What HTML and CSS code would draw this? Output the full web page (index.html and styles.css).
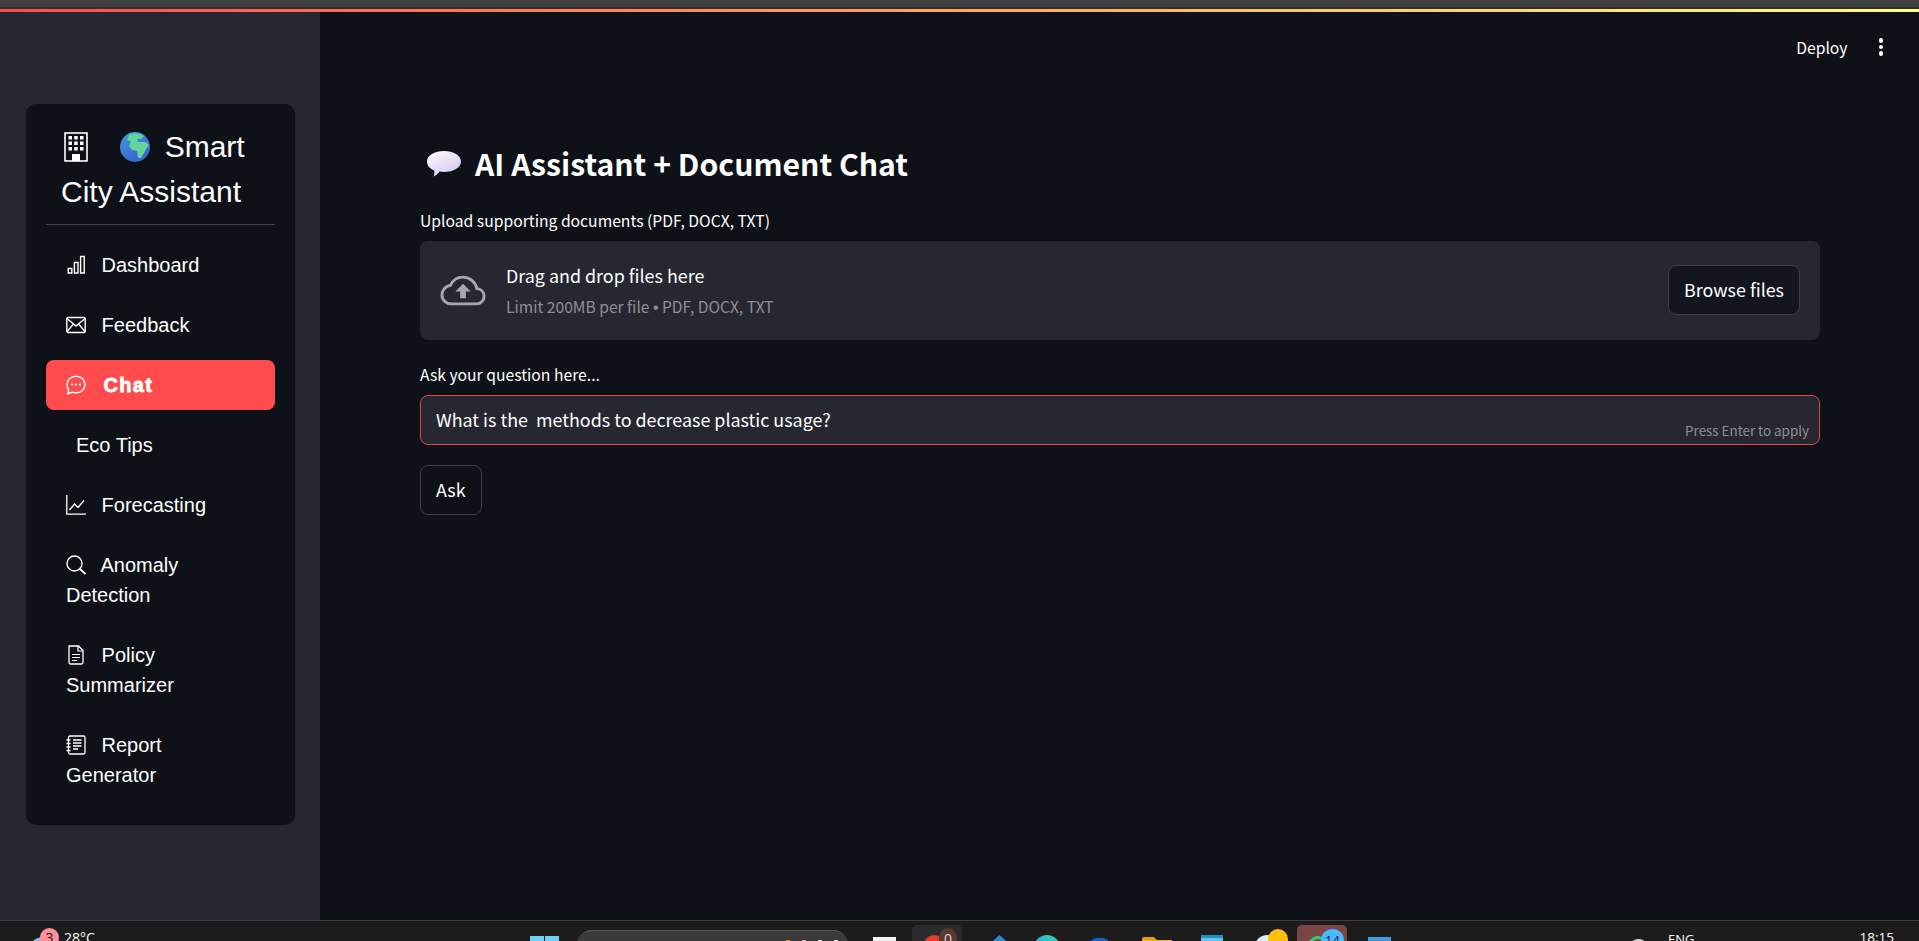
FILE: index.html
```html
<!DOCTYPE html>
<html>
    <head lang="en">
        <meta name="viewport" content="width=device-width, initial-scale=1" />
        <title>Smart City Assistant</title>
        <link rel="stylesheet" href="styles.css">
    </head>
    <body>
        <div class="browser-strip"></div>
        <div class="deco-line"></div>

        <div class="app">
            <aside class="sidebar">
                <nav class="menu-card">
                    <div class="brand">
                        <svg class="brand-building" viewBox="0 0 24 30" width="24" height="30">
                            <rect x="1" y="1" width="22" height="28" fill="none" stroke="#fff" stroke-width="1.6"/>
                            <g fill="#fff">
                                <rect x="4.500" y="4" width="3.500" height="3.500"/><rect x="10.200" y="4" width="3.500" height="3.500"/><rect x="16" y="4" width="3.500" height="3.500"/>
                                <rect x="4.500" y="9.500" width="3.500" height="3.500"/><rect x="10.200" y="9.500" width="3.500" height="3.500"/><rect x="16" y="9.500" width="3.500" height="3.500"/>
                                <rect x="4.500" y="15" width="3.500" height="3.500"/><rect x="10.200" y="15" width="3.500" height="3.500"/><rect x="16" y="15" width="3.500" height="3.500"/>
                                <rect x="8" y="22" width="8" height="7"/>
                            </g>
                        </svg>
                        <svg class="brand-globe" viewBox="0 0 30 30" width="30" height="30">
                            <defs>
                                <linearGradient id="sea" x1="0" y1="0" x2="0.6" y2="1">
                                    <stop offset="0" stop-color="#3f9be0"/>
                                    <stop offset="1" stop-color="#3a62d0"/>
                                </linearGradient>
                            </defs>
                            <circle cx="15" cy="15" r="15" fill="url(#sea)"/>
                            <path d="M9 3 C13 .5 20 .5 24 4 L21 7 L17 7 L18 10 L26 10 L29 13 L26 17 L24 21 L21 26 L18 26 L17 19 L12 18 L9 14 L11 9 L7 8 Z" fill="#62d59b"/>
                        </svg>
                        <span class="brand-word">Smart</span>
                        <span class="brand-line">City Assistant</span>
                    </div>
                    <hr class="brand-rule">

                    <a class="menu-item">
                        <svg class="menu-icon" viewBox="0 0 20 20" width="20" height="20"><path d="M2.200 13.500h3.600v4.500H2.200zM8.400 7.500h3.600v10.500H8.400zM14.600 1.500h3.600v16.500h-3.600z" fill="none" stroke="#fff" stroke-width="1.400"/></svg>
                        Dashboard
                    </a>
                    <a class="menu-item">
                        <svg class="menu-icon" viewBox="0 0 20 20" width="20" height="20"><rect x="0.800" y="2.500" width="18.400" height="15" rx="1.500" fill="none" stroke="#fff" stroke-width="1.400"/><path d="M1 3.500l9 7.500 9-7.500M1 16.500l6.500-7.500M19 16.500l-6.500-7.500" fill="none" stroke="#fff" stroke-width="1.400"/></svg>
                        Feedback
                    </a>
                    <a class="menu-item active">
                        <svg class="menu-icon" viewBox="0 0 20 20" width="20" height="20"><path d="M10 1.200c5 0 9 3.600 9 8.300s-4 8.300-9 8.300c-1.300 0-2.500-.2-3.600-.7C5 17.800 3 18.600 1.600 18.700c.6-1 1.100-2.300 1-3.700C1.600 13.500 1 11.600 1 9.500 1 4.800 5 1.200 10 1.200z" fill="none" stroke="#fff" stroke-width="1.400"/><circle cx="6" cy="9.500" r="1.100" fill="#fff"/><circle cx="10" cy="9.500" r="1.100" fill="#fff"/><circle cx="14" cy="9.500" r="1.100" fill="#fff"/></svg>
                        <span class="active-text">Chat</span>
                    </a>
                    <a class="menu-item no-icon">Eco Tips</a>
                    <a class="menu-item">
                        <svg class="menu-icon" viewBox="0 0 20 20" width="20" height="20"><path d="M.8 0v19.200H20" fill="none" stroke="#fff" stroke-width="1.300"/><path d="M3.500 15l5-6 3.500 3.500L18 5.500" fill="none" stroke="#fff" stroke-width="1.400"/></svg>
                        Forecasting
                    </a>
                    <a class="menu-item two-line">
                        <svg class="menu-icon" viewBox="0 0 20 20" width="20" height="20"><circle cx="8.500" cy="8.500" r="7.500" fill="none" stroke="#fff" stroke-width="1.400"/><path d="M14 14l5.500 5" fill="none" stroke="#fff" stroke-width="1.800"/></svg>
                        Anomaly Detection
                    </a>
                    <a class="menu-item two-line">
                        <svg class="menu-icon" viewBox="0 0 20 20" width="20" height="20"><path d="M3 1h9.500L17 5.500V17.500a1.500 1.500 0 0 1-1.500 1.500h-11A1.500 1.500 0 0 1 3 17.500z" fill="none" stroke="#fff" stroke-width="1.300"/><path d="M12 1v5h5M6 9.500h8M6 12.500h8M6 15.500h5" fill="none" stroke="#fff" stroke-width="1.200"/></svg>
                        Policy Summarizer
                    </a>
                    <a class="menu-item two-line">
                        <svg class="menu-icon" viewBox="0 0 20 20" width="20" height="20"><rect x="2.500" y="1" width="16.500" height="18" rx="1.500" fill="none" stroke="#fff" stroke-width="1.300"/><path d="M.5 5h4M.5 8.500h4M.5 12h4M.5 15.500h4M7 5h8.500M7 8h8.500M7 11h8.500M7 14h5" fill="none" stroke="#fff" stroke-width="1.300"/></svg>
                        Report Generator
                    </a>
                </nav>
            </aside>

            <main class="main">
                <div class="toolbar">
                    <span class="deploy">Deploy</span>
                    <span class="kebab"><i></i><i></i><i></i></span>
                </div>

                <div class="content">
                    <h1 class="page-title">
                        <svg class="title-bubble" viewBox="0 0 36 28" width="36" height="28">
                            <defs>
                                <linearGradient id="bubble" x1="0" y1="0" x2="0.7" y2="1">
                                    <stop offset="0" stop-color="#ffffff"/>
                                    <stop offset="1" stop-color="#d5c6ef"/>
                                </linearGradient>
                            </defs>
                            <path d="M18 1c9.500 0 17 4.500 17 10.500S27.500 22 18 22c-1.500 0-3-.1-4.500-.4C12 24 9.500 26 7.500 26.500c.8-1.600 1-3.500.7-6C3.500 18.500 1 15.200 1 11.500 1 5.500 8.500 1 18 1z" fill="url(#bubble)"/>
                        </svg>
                        AI Assistant + Document Chat
                    </h1>

                    <label class="field-label">Upload supporting documents (PDF, DOCX, TXT)</label>
                    <div class="dropzone">
                        <svg class="cloud" viewBox="0 0 48 32" width="46" height="31">
                            <path d="M12 30h26c4.500 0 8-3.500 8-8s-3.300-7.700-7.500-8C37 7 31 2 24 2c-6 0-10.800 3.500-13 8.500C6 11.300 2 15.500 2 20.500 2 26 6.500 30 12 30z" fill="none" stroke="#a3a8b8" stroke-width="3"/>
                            <path d="M24 9l8 8h-5v7h-6v-7h-5z" fill="#a3a8b8"/>
                        </svg>
                        <div class="drop-text">
                            <div class="drop-title">Drag and drop files here</div>
                            <div class="drop-limit">Limit 200MB per file <span class="bullet">•</span> PDF, DOCX, TXT</div>
                        </div>
                        <button class="btn browse">Browse files</button>
                    </div>

                    <label class="field-label ask-label">Ask your question here...</label>
                    <div class="question">
                        <span class="question-text">What is the&nbsp; methods to decrease plastic usage?</span>
                        <span class="press-enter">Press Enter to apply</span>
                    </div>

                    <button class="btn ask">Ask</button>
                </div>
            </main>
        </div>

        <footer class="taskbar">
            <div class="weather">
                <span class="weather-cloud"></span>
                <span class="weather-badge">3</span>
                <span class="weather-temp">28°C</span>
            </div>
            <span class="start"><i></i><i></i></span>
            <span class="search-pill"><i class="dot-orange"></i><i class="dot-tan"></i><i></i><i></i></span>
            <span class="task-icon white-box"></span>
            <span class="task-tile dark-tile"><b class="red-dot"></b><b class="brown-badge">0</b></span>
            <span class="task-icon blue-drop"></span>
            <span class="task-icon teal-round"></span>
            <span class="task-icon blue-tab"></span>
            <span class="task-icon folder"></span>
            <span class="task-icon notepad"></span>
            <span class="task-icon browser-round"><b class="yellow-dot"></b></span>
            <span class="task-tile active-tile"><b class="green-arc"></b><b class="blue-badge">14</b></span>
            <span class="task-icon blue-square"></span>
            <span class="tray-mark"></span>
            <span class="tray-lang">ENG</span>
            <span class="tray-time">18:15</span>
        </footer>
    </body>
</html>
```

FILE: styles.css
```css
html, body {
    margin: 0;
    height: 100%;
    overflow: hidden;
}

body {
    display: flex;
    flex-direction: column;
    height: 941px;
    background-color: #0e1117;
    color: #fff;
    font-family: "Noto Sans CJK SC", "Noto Sans", sans-serif;
}

.browser-strip {
    height: 7px;
    border-bottom: 2px solid #2f2f2f;
    background-color: #404040;
}

.deco-line {
    height: 3px;
    background-image: linear-gradient(90deg, #ff4b4b, #fffd80);
}

.app {
    flex: 1;
    display: flex;
    min-height: 0;
}

/* SIDEBAR */

.sidebar {
    width: 320px;
    box-sizing: border-box;
    padding: 92px 25px 0 26px;
    background-color: #262730;
}

.menu-card {
    height: 721px;
    box-sizing: border-box;
    padding: 20px 20px 0;
    border-radius: 10px;
    background-color: #0e1117;
    font-family: "Liberation Sans", Arial, sans-serif;
}

.brand {
    padding-left: 15px;
    font-size: 30px;
    line-height: 45px;
    white-space: nowrap;
}

.brand-building {
    vertical-align: -5px;
    margin-left: 3px;
}

.brand-globe {
    vertical-align: -5px;
    margin-left: 24px;
}

.brand-word {
    margin-left: 6px;
}

.brand-line {
    display: block;
}

.brand-rule {
    height: 1px;
    margin: 10px 0 15px;
    border: 0;
    background-color: #45464d;
}

.menu-item {
    display: block;
    box-sizing: border-box;
    height: 50px;
    margin-bottom: 10px;
    padding: 10px 20px;
    border-radius: 8px;
    font-size: 20px;
    line-height: 30px;
    color: #fff;
}

.menu-item.active {
    background-color: #ff4b4b;
}

.active-text {
    margin-left: 2px;
    font-weight: bold;
    letter-spacing: 1.300px;
    -webkit-text-stroke: 0.8px #fff;
}

.menu-item.no-icon {
    padding-left: 30px;
}

.menu-item.two-line {
    height: 80px;
    padding-right: 60px;
}

.menu-icon {
    vertical-align: -3px;
    margin-right: 10px;
}

/* MAIN */

.main {
    flex: 1;
    min-width: 0;
}

.toolbar {
    display: flex;
    justify-content: flex-end;
    align-items: center;
    height: 56px;
    padding-top: 14px;
    box-sizing: border-box;
    font-size: 15.700px;
}

.deploy {
    margin-right: 31px;
}

.kebab {
    display: flex;
    flex-direction: column;
    gap: 2px;
    margin-right: 36px;
}

.kebab i {
    width: 4.500px;
    height: 4.500px;
    border-radius: 50%;
    background-color: #fff;
}

.content {
    width: 1400px;
    margin-left: 100px;
    padding-top: 73px;
}

.page-title {
    display: flex;
    align-items: center;
    margin: 0 0 24px;
    font-size: 30.200px;
    font-weight: 600;
    line-height: 45px;
}

.title-bubble {
    margin: 0 13px 0 6px;
}

.field-label {
    display: block;
    margin-bottom: 9px;
    font-size: 15.700px;
    line-height: 22px;
}

.dropzone {
    display: flex;
    align-items: center;
    height: 99px;
    box-sizing: border-box;
    padding: 0 20px;
    border-radius: 8px;
    background-color: #262730;
}

.cloud {
    margin-right: 20px;
}

.drop-text {
    flex: 1;
}

.drop-title {
    font-size: 17.900px;
    line-height: 24px;
}

.drop-limit {
    margin-top: 9px;
    font-size: 15.600px;
    line-height: 20px;
    color: #8e8f96;
}

.bullet {
    font-family: "Liberation Sans", Arial, sans-serif;
}

.btn {
    box-sizing: border-box;
    height: 50px;
    padding: 0 15px 2px;
    border: 1px solid #3d3f48;
    border-radius: 8px;
    background-color: #13161e;
    color: #fff;
    font-family: inherit;
    font-size: 17.900px;
}

.browse {
    margin-bottom: 2px;
}

.ask-label {
    margin-top: 24px;
}

.question {
    position: relative;
    box-sizing: border-box;
    height: 50px;
    padding: 0 15px;
    border: 1px solid #e2434b;
    border-radius: 8px;
    background-color: #262730;
    font-size: 17.900px;
    line-height: 46px;
}

.press-enter {
    position: absolute;
    right: 10px;
    bottom: 6px;
    font-size: 13.400px;
    line-height: 16px;
    color: #8e8f96;
}

.ask {
    display: block;
    margin-top: 20px;
    background-color: #0e1117;
}

/* TASKBAR - the screenshot cuts it off at the bottom */

.taskbar {
    display: flex;
    flex: none;
    align-items: flex-start;
    height: 21px;
    box-sizing: border-box;
    border-top: 1px solid #3f3f3f;
    background-color: #1c1c1c;
    overflow: hidden;
    font-family: "Open Sans", sans-serif;
    font-size: 14px;
    line-height: 16px;
}

.taskbar span {
    flex: none;
}

.weather {
    display: flex;
    flex: none;
    width: 498px;
    padding-left: 32px;
    box-sizing: content-box;
}

.weather-cloud {
    width: 24px;
    height: 14px;
    margin-top: 16px;
    border-radius: 50%;
    background-color: #9db8e8;
}

.weather-badge {
    width: 19px;
    height: 19px;
    margin: 7px 0 0 -16px;
    border-radius: 50%;
    background-color: #ff8f9a;
    color: #1c1c1c;
    text-align: center;
    line-height: 19px;
}

.weather-temp {
    margin: 9px 0 0 5px;
}

.start {
    display: flex;
    gap: 1px;
    margin-top: 15px;
}

.start i {
    width: 14px;
    height: 14px;
    background-color: #6fd0f5;
}

.search-pill {
    display: flex;
    justify-content: flex-end;
    gap: 12px;
    width: 271px;
    height: 30px;
    box-sizing: border-box;
    margin: 9px 0 0 18px;
    padding: 9px 10px 0 0;
    border-top: 1px solid #5a5a5a;
    border-radius: 22px;
    background-color: #3a3a3a;
}

.search-pill i {
    width: 4px;
    height: 4px;
    background-color: #d8d8d8;
}

.search-pill .dot-orange {
    background-color: #e08a2c;
}

.search-pill .dot-tan {
    background-color: #c9a877;
}

.task-icon {
    display: block;
    position: relative;
}

.white-box {
    width: 23px;
    height: 20px;
    margin: 16px 0 0 25px;
    background-color: #f4f4f4;
}

.task-tile {
    display: block;
    position: relative;
    width: 50px;
    height: 24px;
    border-radius: 5px;
    margin-top: 4px;
}

.task-tile b {
    position: absolute;
    border-radius: 50%;
}

.dark-tile {
    margin-left: 16px;
    background-color: #2b2b2b;
}

.red-dot {
    left: 12px;
    top: 10px;
    width: 20px;
    height: 20px;
    background-color: #e8392e;
}

.brown-badge {
    left: 27px;
    top: 3px;
    width: 18px;
    height: 22px;
    background-color: #5a3a30;
    color: #e4d8d4;
    font-weight: normal;
    text-align: center;
    line-height: 22px;
}

.blue-drop {
    width: 17px;
    height: 17px;
    margin: 14px 0 0 29px;
    background-color: #1e8fd6;
    clip-path: polygon(50% 0, 100% 45%, 100% 100%, 0 100%, 0 45%);
}

.teal-round {
    width: 26px;
    height: 26px;
    margin: 14px 0 0 26px;
    border-radius: 50%;
    background-image: linear-gradient(90deg, #2fb6e0, #35d0a0);
}

.blue-tab {
    width: 20px;
    height: 16px;
    margin: 17px 0 0 29px;
    border-radius: 8px 6px 0 0;
    background-color: #1560c8;
}

.folder {
    width: 30px;
    height: 12px;
    margin: 16px 0 0 33px;
    border-radius: 2px 0 0 0;
    background-image: linear-gradient(180deg, #e0a000 3px, #f0b820 3px);
    clip-path: polygon(0 0, 40% 0, 50% 25%, 100% 25%, 100% 100%, 0 100%);
}

.notepad {
    width: 22px;
    height: 14px;
    margin: 14px 0 0 29px;
    border-top: 3px solid #1d8fc4;
    background-color: #62c6ea;
}

.browser-round {
    width: 27px;
    height: 27px;
    margin: 14px 0 0 31px;
    border-radius: 50%;
    background-color: #dfeaf4;
}

.yellow-dot {
    position: absolute;
    left: 14px;
    top: -6px;
    width: 20px;
    height: 20px;
    border-radius: 50%;
    background-color: #ffc107;
}

.active-tile {
    margin-left: 16px;
    background-color: #7a4548;
}

.green-arc {
    left: 11px;
    top: 11px;
    width: 14px;
    height: 14px;
    border: 3px solid #2fcf78;
    border-radius: 50%;
    background-color: #7a4548;
}

.blue-badge {
    left: 24px;
    top: 4px;
    width: 23px;
    height: 23px;
    background-color: #4cb8ff;
    color: #1c1c1c;
    font-size: 13px;
    font-weight: normal;
    text-align: center;
    line-height: 23px;
}

.blue-square {
    width: 23px;
    height: 20px;
    margin: 16px 0 0 21px;
    background-color: #3d9be0;
}

.tray-mark {
    display: block;
    width: 17px;
    height: 8px;
    margin: 18px 0 0 239px;
    border-radius: 8px 8px 0 0;
    background-color: #d0d0d0;
}

.tray-lang {
    margin: 10px 0 0 21px;
    font-size: 13px;
}

.tray-time {
    margin: 8px 0 0 165px;
    font-size: 13.500px;
}
```
